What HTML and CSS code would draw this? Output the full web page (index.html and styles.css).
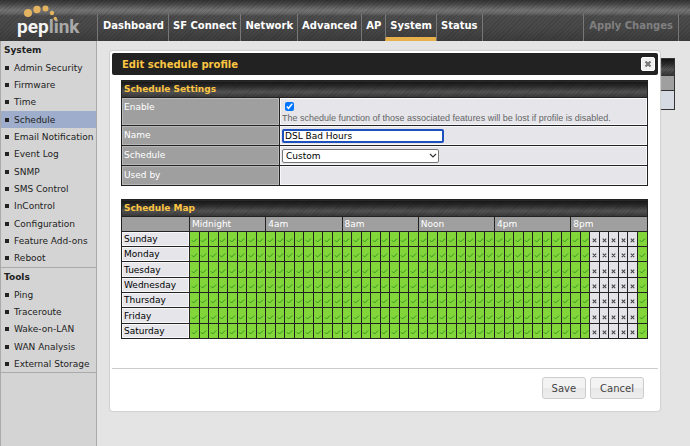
FILE: index.html
```html
<!DOCTYPE html>
<html lang="en">
<head>
  <meta charset="UTF-8">
  <meta name="viewport" content="width=device-width, initial-scale=1">
  <title>Edit schedule profile</title>
  <link rel="stylesheet" href="styles.css">
</head>
<body>

  <svg class="symbols" aria-hidden="true">
    <symbol id="check" viewBox="0 0 8 8"><path d="M1 4.3L3 6.3L7 2.3" fill="none" stroke="#2b8a1e" stroke-width="1"/></symbol>
    <symbol id="cross" viewBox="0 0 8 8"><path d="M2 2.5L6 6.5M6 2.5L2 6.5" fill="none" stroke="#444" stroke-width="1.2"/></symbol>
  </svg>

  <header class="topbar">
    <a class="logo" href="#" aria-label="peplink">
      <svg width="96" height="41" viewBox="0 0 96 41">
        <text x="17" y="33" class="logo-text"><tspan fill="#f4f4f4">pep</tspan><tspan fill="#a9a9a9">link</tspan></text>
        <g fill="#e3b360">
          <circle cx="28" cy="13" r="4"/>
          <circle cx="37" cy="9.5" r="3.7"/>
          <circle cx="45.5" cy="8.5" r="3"/>
          <circle cx="52" cy="13" r="2.2"/>
          <circle cx="55.3" cy="18.5" r="1.7"/>
        </g>
      </svg>
    </a>
    <nav class="nav">
      <a href="#">Dashboard</a>
      <a href="#">SF Connect</a>
      <a href="#">Network</a>
      <a href="#">Advanced</a>
      <a href="#">AP</a>
      <a href="#" class="active">System</a>
      <a href="#">Status</a>
    </nav>
    <button class="apply" disabled>Apply Changes</button>
  </header>

  <div class="page">
    <aside class="sidebar">
      <h2>System</h2>
      <ul>
        <li><a href="#">Admin Security</a></li>
        <li><a href="#">Firmware</a></li>
        <li><a href="#">Time</a></li>
        <li class="selected"><a href="#">Schedule</a></li>
        <li><a href="#">Email Notification</a></li>
        <li><a href="#">Event Log</a></li>
        <li><a href="#">SNMP</a></li>
        <li><a href="#">SMS Control</a></li>
        <li><a href="#">InControl</a></li>
        <li><a href="#">Configuration</a></li>
        <li><a href="#">Feature Add-ons</a></li>
        <li><a href="#">Reboot</a></li>
      </ul>
      <h2>Tools</h2>
      <ul>
        <li><a href="#">Ping</a></li>
        <li><a href="#">Traceroute</a></li>
        <li><a href="#">Wake-on-LAN</a></li>
        <li><a href="#">WAN Analysis</a></li>
        <li><a href="#">External Storage</a></li>
      </ul>
    </aside>

    <main class="content">
      <div class="profiles">
        <div class="profiles-title"></div>
        <div class="profiles-head"></div>
        <div class="profiles-row"></div>
      </div>

      <form class="dialog" role="dialog" aria-labelledby="dialog-title" onsubmit="return false">
        <div class="dialog-title">
          <h1 id="dialog-title">Edit schedule profile</h1>
          <button type="button" class="close" aria-label="Close">
            <svg width="8" height="8" viewBox="0 0 8 8"><path d="M1.5 1.5L6.5 6.5M6.5 1.5L1.5 6.5" stroke="#777" stroke-width="2.2"/></svg>
          </button>
        </div>

        <div class="dialog-body">
          <table class="settings">
            <colgroup><col class="label-col"><col></colgroup>
            <thead>
              <tr><th colspan="2" class="caption">Schedule Settings</th></tr>
            </thead>
            <tbody>
              <tr class="tall">
                <th><label for="enable">Enable</label></th>
                <td>
                  <input type="checkbox" id="enable" checked>
                  <p class="hint">The schedule function of those associated features will be lost if profile is disabled.</p>
                </td>
              </tr>
              <tr>
                <th><label for="name">Name</label></th>
                <td><input type="text" id="name" value="DSL Bad Hours" autofocus></td>
              </tr>
              <tr>
                <th><label for="schedule">Schedule</label></th>
                <td>
                  <div class="select">
                    <select id="schedule"><option>Custom</option></select>
                    <svg width="8" height="6" viewBox="0 0 8 6"><path d="M1 1L4 4L7 1" fill="none" stroke="#333" stroke-width="1.2"/></svg>
                  </div>
                </td>
              </tr>
              <tr>
                <th>Used by</th>
                <td></td>
              </tr>
            </tbody>
          </table>

          <table class="map">
            <colgroup><col class="day-col"><col span="48"></colgroup>
            <thead>
              <tr><th colspan="49" class="caption">Schedule Map</th></tr>
              <tr class="hours">
                <th></th>
                <th colspan="8">Midnight</th>
                <th colspan="8">4am</th>
                <th colspan="8">8am</th>
                <th colspan="8">Noon</th>
                <th colspan="8">4pm</th>
                <th colspan="8">8pm</th>
              </tr>
            </thead>
            <tbody id="days"></tbody>
          </table>
        </div>

        <div class="dialog-buttons">
          <button type="submit">Save</button>
          <button type="button">Cancel</button>
        </div>
      </form>
    </main>
  </div>

  <script>
    const days = ["Sunday", "Monday", "Tuesday", "Wednesday", "Thursday", "Friday", "Saturday"];

    // half-hour slots, off from 9:00pm to 11:30pm
    const offFrom = 42;
    const offTo = 47;

    document.getElementById('days').innerHTML = days.map(day => {
      let cells = "";
      for (let i = 0; i < 48; i++) {
        const off = i >= offFrom && i < offTo;
        cells += `<td class="${off ? "off" : "on"}"><svg><use href="#${off ? "cross" : "check"}"/></svg></td>`;
      }
      return `<tr><th>${day}</th>${cells}</tr>`;
    }).join("");

    const nameBox = document.getElementById('name');
    nameBox.focus();
    nameBox.setSelectionRange(nameBox.value.length, nameBox.value.length);
  </script>

</body>
</html>
```
FILE: styles.css
```css
* {
  box-sizing: border-box;
}

body {
  margin: 0;
  min-height: 100vh;
  display: flex;
  flex-direction: column;
  background: #e4e4e4;
  color: #222;
  font-family: Verdana, "DejaVu Sans", sans-serif;
  font-size: 9px;
}

h1, h2, p, ul {
  margin: 0;
  padding: 0;
}

a {
  color: inherit;
  text-decoration: none;
}

input, select, button {
  font-family: inherit;
  font-size: 9px;
  margin: 0;
}

.symbols {
  position: absolute;
  width: 0;
  height: 0;
}

/* top bar */
.topbar {
  display: flex;
  height: 41px;
  padding-right: 11px;
  background:
    repeating-linear-gradient(135deg, rgba(0, 0, 0, 0.1) 0 1px, transparent 1px 3px),
    linear-gradient(#333 0, #484848 4px, #747474 10px, #6a6a6a 13px, #4c4c4c 16px, #484848 28px, #3c3c3c 41px);
}

.logo {
  width: 97px;
}

.logo svg {
  display: block;
}

.logo-text {
  font-family: Roboto, sans-serif;
  font-size: 19px;
  font-weight: 700;
}

.nav {
  display: flex;
  flex: 1;
  margin-top: 14px;
}

.nav a {
  padding: 0 4px;
  border-left: 1px solid #777;
  color: #fff;
  font-size: 10px;
  font-weight: bold;
  line-height: 23px;
}

.nav a:first-child {
  padding-left: 5px;
}

.nav a:last-child {
  border-right: 1px solid #777;
}

.nav a.active {
  border-bottom: 4px solid #e8b04a;
}

.apply {
  margin-top: 14px;
  padding: 0 5px 4px;
  background: none;
  border: solid #777;
  border-width: 0 1px;
  color: #808080;
  font-size: 10px;
  font-weight: bold;
}

.page {
  display: flex;
  flex: 1;
}

/* left menu */
.sidebar {
  width: 97px;
  background: #d4d4d4;
  border: solid #aaa;
  border-width: 0 1px;
}

.sidebar h2 {
  padding-left: 3px;
  font-size: 9px;
  line-height: 18px;
}

.sidebar ul {
  list-style: none;
  border-bottom: 1px solid #aaa;
}

.sidebar li {
  display: flex;
  align-items: center;
  height: 17px;
  padding-left: 4px;
  white-space: nowrap;
}

.sidebar li:nth-child(3n) {
  margin-bottom: 1px;
}

.sidebar li::before {
  content: "";
  width: 4px;
  height: 4px;
  margin-right: 5px;
  background: #222;
}

.sidebar .selected {
  background: #9dadcb;
}

/* profile list under the dialog */
.content {
  flex: 1;
  position: relative;
  padding: 17px 15px;
}

.profiles {
  border: 1px solid #333;
}

.profiles-title {
  height: 16px;
}

.profiles-head {
  height: 16px;
  background: #9f9f9f;
  border: solid #333;
  border-width: 1px 0;
}

.profiles-row {
  height: 18px;
  background: #d6dae2;
}

/* dialog */
.dialog {
  position: absolute;
  top: 10px;
  left: 13px;
  right: 30px;
  padding: 2px;
  background: #fff;
  border-radius: 3px;
  box-shadow: 0 0 1px 1px #d0d0d0;
}

.dialog-title {
  display: flex;
  align-items: center;
  justify-content: space-between;
  height: 22px;
  padding: 0 3px 0 10px;
  background: #222;
  border-radius: 2px;
}

.dialog-title h1 {
  color: #fdc642;
  font-size: 10px;
}

.close {
  display: flex;
  align-items: center;
  justify-content: center;
  width: 14px;
  height: 14px;
  padding: 0;
  background: #f0f0f0;
  border: 1px solid #fff;
  border-radius: 2px;
}

.dialog-body {
  padding: 5px 10px 29px 9px;
}

table {
  width: 100%;
  table-layout: fixed;
  border-collapse: collapse;
}

th, td {
  height: 20px;
  padding: 0 2px;
  border: 1px solid #222;
  text-align: left;
  font-weight: normal;
}

.caption {
  height: 17px;
  color: #fdc642;
  font-weight: bold;
}

.profiles-title,
.caption {
  background:
    repeating-linear-gradient(135deg, rgba(0, 0, 0, 0.15) 0 1px, transparent 1px 3px),
    linear-gradient(#161616, #2c2c2c 30%, #555 65%, #383838);
}

.label-col {
  width: 158px;
}

.settings tbody th {
  padding-top: 4px;
  background: #9f9f9f;
  box-shadow: inset 0 0 0 1px #b8b8b8;
  color: #fff;
  vertical-align: top;
}

.settings td {
  background: #e5e5ea;
  box-shadow: inset 0 0 0 1px #f8f8fa;
}

.settings .tall th,
.settings .tall td {
  height: 28px;
}

.hint {
  color: #666;
  font-family: Arial, "Liberation Sans", sans-serif;
  font-size: 9px;
  line-height: 10px;
}

input[type="checkbox"] {
  display: block;
  width: 9px;
  height: 9px;
  margin: 2px 3px;
}

input[type="text"] {
  display: block;
  width: 162px;
  height: 14px;
  padding: 0 1px;
  background: #fff;
  border: 2px solid #1b50bd;
  border-radius: 2px;
  outline: none;
  color: #000;
}

.select {
  position: relative;
  width: 157px;
}

.select select {
  display: block;
  width: 100%;
  height: 14px;
  padding: 0 3px;
  appearance: none;
  background: #fff;
  border: 1px solid #777;
  border-radius: 2px;
  color: #000;
}

.select svg {
  position: absolute;
  top: 4px;
  right: 2px;
}

/* weekly map */
.map {
  margin-top: 13px;
}

.day-col {
  width: 68px;
}

.map .hours th {
  height: 15px;
  background: #9f9f9f;
  color: #fff;
}

.map tbody th {
  height: 15px;
  background: #e5e5ea;
  box-shadow: inset 0 0 0 1px #f8f8fa;
  color: #000;
  line-height: 12px;
}

.map tbody tr:nth-child(3n) th {
  height: 16px;
}

.map td {
  height: 15px;
  padding: 0;
}

.map td svg {
  display: block;
  width: 7px;
  height: 8px;
  margin: 2px auto 0;
}

.on {
  background: #82d63a;
}

.off {
  background: #e3e3e8;
}

.dialog-buttons {
  display: flex;
  justify-content: flex-end;
  gap: 4px;
  padding: 8px 14px 10px;
  border-top: 1px solid #ccc;
}

.dialog-buttons button {
  height: 22px;
  padding: 0 9px;
  background: linear-gradient(#f3f3f3 50%, #e8e8e8 50%, #ededed);
  border: 1px solid #ccc;
  border-radius: 3px;
  color: #444;
  font-size: 10px;
}
```
